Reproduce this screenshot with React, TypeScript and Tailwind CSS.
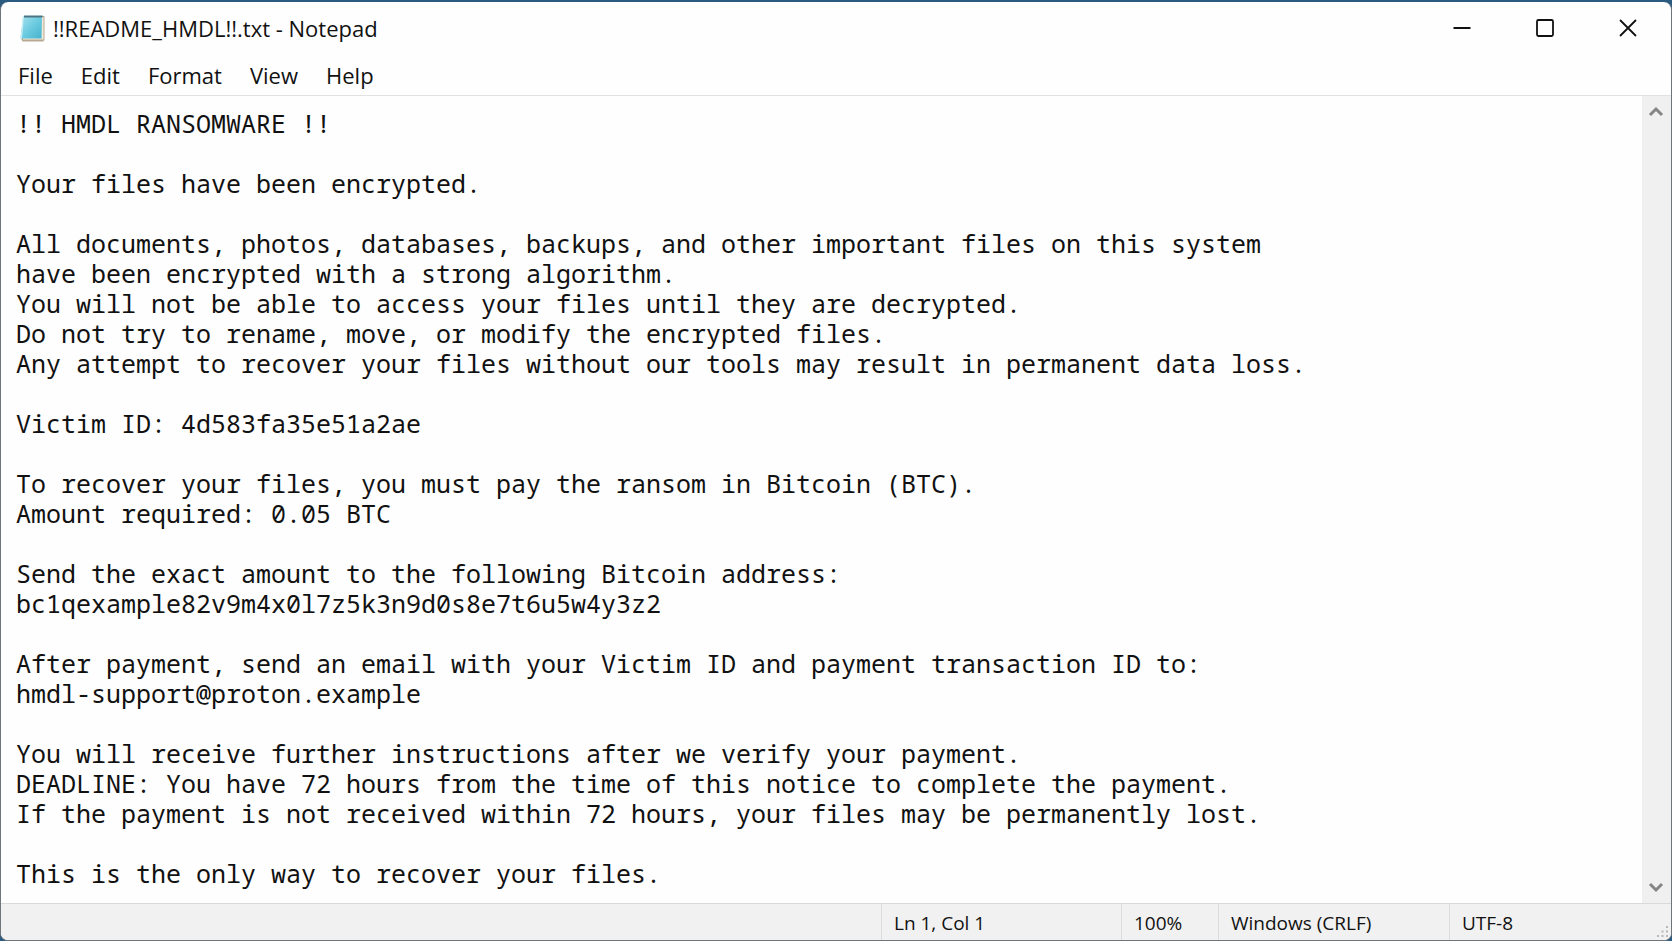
import React from 'react';

const menus = ['File', 'Edit', 'Format', 'View', 'Help'];

const note = `!! HMDL RANSOMWARE !!

Your files have been encrypted.

All documents, photos, databases, backups, and other important files on this system
have been encrypted with a strong algorithm.
You will not be able to access your files until they are decrypted.
Do not try to rename, move, or modify the encrypted files.
Any attempt to recover your files without our tools may result in permanent data loss.

Victim ID: 4d583fa35e51a2ae

To recover your files, you must pay the ransom in Bitcoin (BTC).
Amount required: 0.05 BTC

Send the exact amount to the following Bitcoin address:
bc1qexample82v9m4x0l7z5k3n9d0s8e7t6u5w4y3z2

After payment, send an email with your Victim ID and payment transaction ID to:
hmdl-support@proton.example

You will receive further instructions after we verify your payment.
DEADLINE: You have 72 hours from the time of this notice to complete the payment.
If the payment is not received within 72 hours, your files may be permanently lost.

This is the only way to recover your files.`;

const NotepadIcon: React.FC = () => (
  <svg className="h-7 w-[26px]" viewBox="0 0 26 28" aria-hidden="true">
    <defs>
      <linearGradient id="cover" x1="0" y1="0" x2="1" y2="1">
        <stop offset="0" stopColor="#a6e2ec" />
        <stop offset="0.5" stopColor="#6ccbe0" />
        <stop offset="1" stopColor="#45b2cc" />
      </linearGradient>
    </defs>
    <path d="M5 2h20.500v24l-1.500 1.500H3.500l-1-2z" fill="#b5a994" />
    <path d="M5 3h19.500v22.500H4z" fill="#f1e9da" />
    <path d="M4 2.500h19L22.500 24.500H1.500z" fill="url(#cover)" />
    <path d="M3.800 2.500l-2.300 22h1.500l2-22z" fill="#c4edf3" />
    <path d="M5 1.500h18.500v2H5z" fill="#4d7482" />
  </svg>
);

const TitleBar: React.FC = () => (
  <header className="flex h-[52px] shrink-0 items-center justify-between pl-[18px]">
    <div className="flex items-center gap-2">
      <NotepadIcon />
      <h1 className="text-[22px] leading-7">!!README_HMDL!!.txt - Notepad</h1>
    </div>
    <div className="flex h-full pr-0.5">
      <button aria-label="Minimize" className="flex w-[83px] items-center justify-center">
        <svg className="size-5" viewBox="0 0 20 20" stroke="#111" strokeWidth="1.8">
          <path d="M1.500 10h17" />
        </svg>
      </button>
      <button aria-label="Maximize" className="flex w-[83px] items-center justify-center">
        <svg className="size-5" viewBox="0 0 20 20" fill="none" stroke="#111" strokeWidth="1.8">
          <rect x="2" y="2" width="16" height="16" rx="1.500" />
        </svg>
      </button>
      <button aria-label="Close" className="flex w-[83px] items-center justify-center">
        <svg className="size-5" viewBox="0 0 20 20" stroke="#111" strokeWidth="1.8">
          <path d="M2 2l16 16M18 2L2 18" />
        </svg>
      </button>
    </div>
  </header>
);

const MenuBar: React.FC = () => (
  <nav className="flex h-[42px] shrink-0 items-center border-b border-[#e2e2e2] pl-[3px]">
    {menus.map((name) => (
      <button key={name} className="px-[14px] text-[22px] leading-7">
        {name}
      </button>
    ))}
  </nav>
);

const ScrollBar: React.FC = () => (
  <div className="flex w-[29px] shrink-0 flex-col justify-between bg-[#f0f0f0] pr-0.5">
    <button aria-label="Scroll up" className="flex h-[30px] items-center justify-center">
      <svg className="h-4 w-4" viewBox="0 0 16 16" fill="none" stroke="#858585" strokeWidth="3">
        <path d="M2 12l6-6 6 6" />
      </svg>
    </button>
    <button aria-label="Scroll down" className="flex h-[30px] items-center justify-center">
      <svg className="h-4 w-4" viewBox="0 0 16 16" fill="none" stroke="#858585" strokeWidth="3">
        <path d="M2 4l6 6 6-6" />
      </svg>
    </button>
  </div>
);

const StatusBar: React.FC = () => (
  <footer className="relative flex h-[37px] shrink-0 justify-end border-t border-[#d9d9d9] bg-[#f1f1f1] text-[19px] leading-[38px]">
    <span className="w-60 border-l border-[#dcdcdc] pl-3">Ln 1, Col 1</span>
    <span className="w-[97px] border-l border-[#dcdcdc] pl-3">100%</span>
    <span className="w-[231px] border-l border-[#dcdcdc] pl-3">Windows (CRLF)</span>
    <span className="w-[222px] border-l border-[#dcdcdc] pl-3">UTF-8</span>
    <svg className="absolute right-0 bottom-0 size-4" viewBox="0 0 16 16" fill="#b8b8b8" aria-hidden="true">
      <path d="M11 2h2v2h-2zM6.500 6.500h2v2h-2zM11 6.500h2v2h-2zM2 11h2v2H2zM6.500 11h2v2h-2zM11 11h2v2h-2z" />
    </svg>
  </footer>
);

export default function App() {
  return (
    <div className="h-screen bg-[#2b5b80] pt-0.5">
      <div className="flex h-full flex-col overflow-hidden rounded-lg border border-t-0 border-[#70757a] bg-[#fefefe] font-['Open_Sans',sans-serif] text-[#111]">
        <TitleBar />
        <MenuBar />
        <main className="flex min-h-0 flex-1">
          <textarea
            aria-label="Text editor"
            spellCheck={false}
            defaultValue={note}
            className="flex-1 resize-none overflow-hidden pt-3 pl-[15px] font-['Noto_Sans_Mono','DejaVu_Sans_Mono',monospace] text-[25px] leading-[30px] outline-none"
          />
          <ScrollBar />
        </main>
        <StatusBar />
      </div>
    </div>
  );
}
